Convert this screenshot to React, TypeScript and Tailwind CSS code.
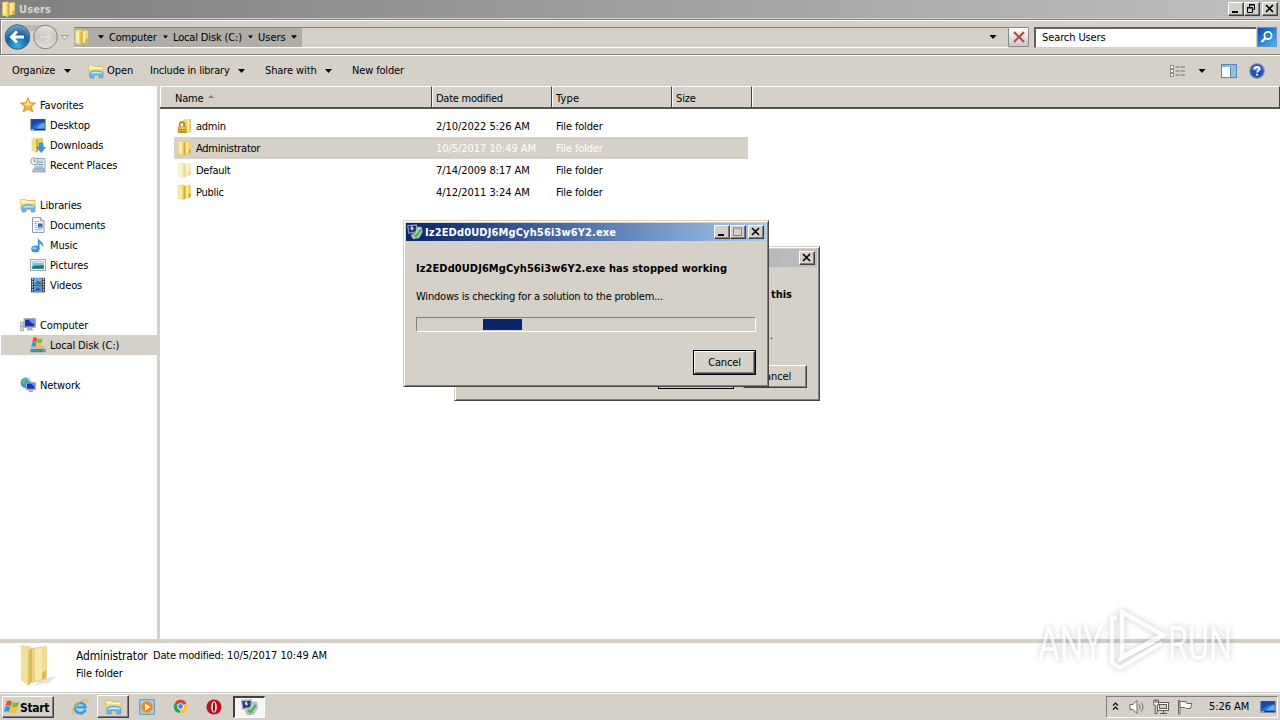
import React, { ReactNode } from "react";
import clsx from "clsx";

interface IconProps {
  className?: string;
}

function FolderIcon({ className = "size-[16px]" }: Readonly<IconProps>) {
  return (
    <svg viewBox="0 0 16 16" className={clsx("shrink-0", className)}>
      <path d="M6 2 L13.8 1.2 V13.5 L6 14.5 Z" fill="#e6c95c" />
      <path d="M8.4 1.9 L13.8 1.4 V12.8 L8.4 14.4 Z" fill="#f0d878" />
      <path d="M9.5 2.5 L11 2.3 V12.8 L9.5 13.3 Z" fill="#fbf0ae" />
      <path d="M1.2 1.2 L6.6 0.5 L8.4 2 V15 L6.5 15.7 L1.2 14.4 Z" fill="#f1d970" />
      <path d="M6.6 2.4 L8.4 2 V15 L6.6 15.6 Z" fill="#d3ad3e" />
      <path d="M2.4 2.3 L4.6 2 V13.8 L2.4 13.3 Z" fill="#fcf2b8" />
      <path d="M11.5 13.4 L13.8 12.6 V9 L11.5 10.5 Z" fill="#cfa93a" />
    </svg>
  );
}

function LockedFolderIcon() {
  return (
    <svg viewBox="0 0 16 16" className="size-[16px] shrink-0">
      <path d="M6 1.5 L9 0.8 V15 L6 14.5 Z" fill="#f0d673" />
      <path d="M9 1.5 L14 1 V13.5 L9 15.3 Z" fill="#e9cd62" />
      <path d="M10 2 L12 1.8 V13 L10 13.8 Z" fill="#fbf0ae" />
      <path
        d="M2.7 9 V6.5 C2.7 3.3 7.3 3.3 7.3 6.5 V9"
        fill="none"
        stroke="#a8842c"
        strokeWidth="1.6"
      />
      <rect x="0.8" y="8.5" width="8.6" height="6.5" rx="0.8" fill="#c48d1d" />
      <rect x="1.5" y="9.2" width="7.2" height="1.6" fill="#eecb62" />
      <rect x="1.5" y="12" width="7.2" height="1" fill="#dfae40" />
    </svg>
  );
}

function LibraryIcon({ className = "size-[16px]" }: Readonly<IconProps>) {
  return (
    <svg viewBox="0 0 16 16" className={clsx("shrink-0", className)}>
      <path d="M0.5 2 H6 L7 3 H15.5 V13 H0.5 Z" fill="#e0bd4c" />
      <path d="M1.2 2.8 H5.6 L6.6 4 H14.8 V6 H1.2 Z" fill="#fdf3b5" />
      <path d="M1.2 6 H14.8 V12.5 H1.2 Z" fill="#f6dd80" />
      <path
        d="M2 9.5 C3 7 13 7 14.8 9.5 V15 H11.2 V11.8 H5.8 V15 H2 Z"
        fill="#6db8e2"
        stroke="#3f8fc1"
        strokeWidth="0.6"
      />
      <path d="M3 9.7 C5 8.3 11 8.3 14 9.6 V10.6 H3 Z" fill="#c3e8f8" />
    </svg>
  );
}

function StarIcon() {
  return (
    <svg viewBox="0 0 16 16" className="size-[16px] shrink-0">
      <path
        d="M8 0.8 L10.1 5.8 L15.5 6.1 L11.3 9.6 L12.8 15 L8 12 L3.2 15 L4.7 9.6 L0.5 6.1 L5.9 5.8 Z"
        fill="#f9b437"
        stroke="#dc7b1c"
        strokeWidth="0.8"
      />
      <path d="M8 2.5 L9.4 6.6 L12.8 6.9 L8 8.8 L3.4 6.9 L6.6 6.6 Z" fill="#fde186" />
    </svg>
  );
}

function DesktopIcon({ className = "size-[16px]" }: Readonly<IconProps>) {
  return (
    <svg viewBox="0 0 16 16" className={clsx("shrink-0", className)}>
      <rect x="0.5" y="2" width="15" height="11.5" fill="#28508e" />
      <rect x="1.3" y="2.8" width="13.4" height="8.8" fill="#2f6ed0" />
      <path d="M1.3 2.8 H14.7 V5 C9 5 5 7 1.3 11 Z" fill="#1c49a6" />
      <path d="M6 11.6 C9 8 12 6 14.7 6 V11.6 Z" fill="#62a8ec" />
      <rect x="1" y="12.2" width="3" height="1" fill="#8bc3f0" />
      <rect x="5" y="12.3" width="10" height="0.8" fill="#15305c" />
    </svg>
  );
}

function DownloadsIcon() {
  return (
    <svg viewBox="0 0 16 16" className="size-[16px] shrink-0">
      <path d="M6 1.5 L13 1 V12 L6 14 Z" fill="#e9cd69" />
      <path d="M1.5 1.5 L6 0.5 L8 2 V15 L6 15.5 L1.5 14 Z" fill="#f3df8c" />
      <path d="M6.2 2.3 L8 2 V15 L6.2 15.5 Z" fill="#cdaa43" />
      <path
        d="M9.3 6 H13 V10.3 H15.6 L11.2 15.6 L6.8 10.3 H9.3 Z"
        fill="#3c9ada"
        stroke="#2173b2"
        strokeWidth="0.6"
      />
    </svg>
  );
}

function RecentIcon() {
  return (
    <svg viewBox="0 0 16 16" className="size-[16px] shrink-0">
      <path d="M5 1.5 H15 V12 H5 Z" fill="#d7e4ec" stroke="#8b9ba7" strokeWidth="0.8" />
      <path d="M3.5 12 H14.5 L15.5 15 H2.5 Z" fill="#a9c6d8" stroke="#7a93a5" strokeWidth="0.7" />
      <path d="M7.5 5 H13 M7.5 7.5 H13 M6 10 H13" stroke="#6c9dbf" strokeWidth="1" />
      <circle cx="4.2" cy="4.2" r="3.5" fill="#eef1f1" stroke="#8e9799" strokeWidth="0.9" />
      <path d="M4.2 2 V4.4 H6" stroke="#5c6468" strokeWidth="0.8" fill="none" />
    </svg>
  );
}

function DocumentIcon() {
  return (
    <svg viewBox="0 0 16 16" className="size-[16px] shrink-0">
      <path d="M2.5 0.6 H10.5 L14 4 V15.4 H2.5 Z" fill="#fbfcfd" stroke="#7f8c9a" strokeWidth="0.9" />
      <path d="M10.5 0.6 V4 H14" fill="#d7dde4" stroke="#7f8c9a" strokeWidth="0.7" />
      <path d="M4.5 4.5 H9 M4.5 6.5 H7 M4.5 8.5 H7 M4.5 10.5 H7 M4.5 12.8 H12" stroke="#8da4bd" strokeWidth="0.9" />
      <rect x="8" y="6.5" width="4.5" height="4.7" fill="#2e62ae" />
      <path d="M8 11.2 L10 8.5 L12.5 11.2 Z" fill="#7fb2e0" />
    </svg>
  );
}

function MusicIcon() {
  return (
    <svg viewBox="0 0 16 16" className="size-[16px] shrink-0">
      <path d="M7.8 0.5 C8.3 3.5 14.5 4.5 13.2 10.5 C12.5 8 11 6.8 9.6 6.4 V12 H7.8 Z" fill="#3f97d6" />
      <ellipse cx="5.4" cy="12" rx="4.2" ry="3.5" fill="#3b94d7" />
      <ellipse cx="4.5" cy="11.2" rx="2" ry="1.3" fill="#8fcdf2" />
    </svg>
  );
}

function PictureIcon() {
  return (
    <svg viewBox="0 0 16 16" className="size-[16px] shrink-0">
      <rect x="0.6" y="2.6" width="14.8" height="11" fill="#fdfdfd" stroke="#8c9cab" strokeWidth="0.9" />
      <rect x="2.3" y="4.2" width="11.4" height="7.8" fill="#79bfec" />
      <path d="M2.3 9.5 C5 7.5 8 9.5 13.7 8 V12 H2.3 Z" fill="#276f8c" />
      <path d="M2.3 11 H13.7 V12 H2.3 Z" fill="#2e9a78" />
      <path d="M3 5.5 C6 4.6 9 6.4 13 5.2" stroke="#e7f6fc" strokeWidth="1" fill="none" />
    </svg>
  );
}

function VideoIcon() {
  return (
    <svg viewBox="0 0 16 16" className="size-[16px] shrink-0">
      <rect x="1" y="0.8" width="14" height="14.6" fill="#39424c" />
      <rect x="4" y="1" width="8" height="6.7" fill="#66aee0" />
      <rect x="4" y="8.5" width="8" height="6.6" fill="#4c9bd6" />
      <path d="M5 6.5 L8 3.5 L11.5 7 Z M5 14 L7.5 10 L11 13 Z" fill="#2b5f9b" />
      <path d="M10 5 L12 4 V7 H10 Z" fill="#b5633c" />
      <path d="M2.5 1.5 V15 M13.5 1.5 V15" stroke="#f0f2f3" strokeWidth="1.2" strokeDasharray="1.3 1.3" />
    </svg>
  );
}

function ComputerIcon() {
  return (
    <svg viewBox="0 0 16 16" className="size-[16px] shrink-0">
      <rect x="4" y="1.5" width="11.5" height="9" fill="#c7ccd6" stroke="#8189a0" strokeWidth="0.6" />
      <rect x="5" y="2.5" width="9.5" height="7" fill="#1e2fb0" />
      <path d="M9 2.5 H14.5 V7 C12 7 10 5 9 2.5 Z" fill="#6f8df0" />
      <path d="M8 10.5 H11.5 L13.5 13.5 H6 Z" fill="#a8b0bb" />
      <rect x="0.7" y="5" width="2.8" height="9" fill="#d2d7cf" stroke="#8d938c" strokeWidth="0.6" />
      <rect x="1.3" y="9" width="1.6" height="1" fill="#62b04c" />
    </svg>
  );
}

function WindowsFlag({ className }: Readonly<IconProps>) {
  return (
    <svg viewBox="0 0 16 16" className={clsx("shrink-0", className)}>
      <path d="M2.8 2.3 C5 1 6.5 1.5 8 2.6 L6.6 7.4 C5 6.3 3.5 6.2 1.4 7.2 Z" fill="#e9562a" />
      <path d="M8.8 3 C10.5 4 12.5 4.2 15.2 2.8 L13.8 7.6 C11.5 8.8 9.5 8.8 7.5 7.7 Z" fill="#7dba3c" />
      <path d="M1.1 8.1 C3 7 4.7 7.2 6.3 8.3 L5 13 C3.5 12 1.8 12 -0.2 13 Z" fill="#3a8fdc" />
      <path d="M7.2 8.7 C9 9.7 11.3 9.8 13.5 8.5 L12.2 13.3 C10 14.6 7.5 14.3 5.8 13.3 Z" fill="#f8bf2c" />
    </svg>
  );
}

function DiskIcon() {
  return (
    <svg viewBox="0 0 16 16" className="size-[16px] shrink-0">
      <path d="M2.5 9 H13.5 L15.6 12 V15.3 H0.4 V12 Z" fill="#b9bfc4" />
      <rect x="0.6" y="12" width="14.8" height="3.2" fill="#66777f" />
      <rect x="1.3" y="12.8" width="9" height="1.6" fill="#3c98a5" />
      <rect x="12.5" y="12.8" width="2" height="1.4" fill="#76dd58" />
      <path d="M3.3 0.8 C5 0 6 0.4 7.4 1.2 L6.6 5.2 C5 4.4 4 4.4 2.4 5.1 Z" fill="#e9562a" />
      <path d="M8 1.5 C9.4 2.3 11 2.2 12.6 1.4 L11.8 5.4 C10 6.2 8.6 6.2 7.2 5.5 Z" fill="#7dba3c" />
      <path d="M2.2 5.7 C3.8 5 5 5.1 6.4 5.8 L5.6 9.7 C4 9 3 9 1.4 9.7 Z" fill="#3a8fdc" />
      <path d="M7.1 6.1 C8.5 6.9 10.2 6.8 11.6 6 L10.8 10 C9 10.8 7.6 10.8 6.3 10 Z" fill="#f8bf2c" />
    </svg>
  );
}

function NetworkIcon() {
  return (
    <svg viewBox="0 0 16 16" className="size-[16px] shrink-0">
      <circle cx="5.8" cy="5.8" r="5.3" fill="#3c9fc4" />
      <path d="M2 3.5 C4 0.8 7 2 7.5 3 C6 4.5 4 4 4.5 6.5 C3 8 1.5 6 2 3.5 Z" fill="#5fc06e" />
      <path d="M7 1 C9.5 1.5 11 4 10.5 5 C9 4.5 8 3 7 1 Z" fill="#b4e6ef" />
      <rect x="6" y="5.6" width="9.5" height="7.2" fill="#c1c8d4" stroke="#7f8799" strokeWidth="0.6" />
      <rect x="7" y="6.5" width="7.5" height="5.3" fill="#1b2fc0" />
      <path d="M11 6.5 H14.5 V10 Z" fill="#708ef2" />
      <path d="M9.5 12.8 H12.3 L13.3 15 H8.5 Z" fill="#a6adb8" />
    </svg>
  );
}

function ErrorReportIcon({ className }: Readonly<IconProps>) {
  return (
    <svg viewBox="0 0 16 16" className={clsx("shrink-0", className)}>
      <path d="M0.3 1.3 L9.8 0.6 V8.2 L1.5 9.7 Z" fill="#cfd4e4" stroke="#6c7288" strokeWidth="0.5" />
      <path d="M1.2 2.1 L9 1.6 V7.4 L2.1 8.7 Z" fill="#1529a5" />
      <path d="M4 2.5 L6.2 2.4 L5.5 4.3 H7.4 L4.2 7.2 L4.8 5.2 H3.3 Z" fill="#f6e34b" />
      <path d="M10 3 H14.5 L15.5 8 L12 14 L6 15 L4 11 L8.5 8.5 Z" fill="#b3cfcb" stroke="#7a968c" strokeWidth="0.5" />
      <path d="M6.5 10.5 L9 12.5 L14 5.5" stroke="#54ac4c" strokeWidth="2.2" fill="none" />
    </svg>
  );
}

function Caret({ className = "w-[7px]" }: Readonly<IconProps>) {
  return (
    <svg viewBox="0 0 7 4" className={clsx("h-[4px] shrink-0", className)}>
      <path d="M0 0 H7 L3.5 4 Z" fill="#000" />
    </svg>
  );
}

const RAISED =
  "border border-t-white border-l-white border-r-[#404040] border-b-[#404040] shadow-[inset_-1px_-1px_0_#808080] bg-[#d5d0c8]";

interface CaptionButtonProps {
  kind: "min" | "max" | "restore" | "close";
  disabled?: boolean;
}

function CaptionButton({ kind, disabled }: Readonly<CaptionButtonProps>) {
  const color = disabled ? "#808080" : "#000";
  return (
    <div className={clsx("flex h-[14px] w-[16px] items-center justify-center", RAISED)}>
      <svg viewBox="0 0 14 12" className="h-[12px] w-[14px]" fill="none" stroke={color}>
        {kind === "min" && <path d="M3 9 H9" strokeWidth="2" />}
        {kind === "max" && (
          <path d="M2.5 2 V9.5 H10.5 V2 M2 2 H11" strokeWidth="1" />
        )}
        {kind === "restore" && (
          <>
            <path d="M4 1.5 H10 M4.5 2 V4 M9.5 2 V6.5 H8" />
            <path d="M4 2 H10 M2 5 H8" />
            <path d="M2.5 4.5 V9.5 H7.5 V4.5 H2" />
          </>
        )}
        {kind === "close" && <path d="M3 2 L10 9 M10 2 L3 9" strokeWidth="1.6" />}
      </svg>
    </div>
  );
}

function TitleBar() {
  return (
    <div className="flex h-[18px] items-center bg-linear-to-r from-[#808080] to-[#c0c0c0] pr-[2px] pl-px">
      <FolderIcon className="size-[16px]" />
      <span className="ml-[2px] flex-1 text-[11px] font-bold tracking-[0.1px] text-[#d9d5cd]">
        Users
      </span>
      <CaptionButton kind="min" />
      <CaptionButton kind="restore" />
      <div className="w-[2px]" />
      <CaptionButton kind="close" />
    </div>
  );
}

function NavBar() {
  return (
    <div className="flex h-[36px] items-center border-t border-b border-l border-t-[#808080] border-b-[#808080] border-l-[#808080] shadow-[inset_1px_1px_0_#fff,0_1px_0_#fff]">
      <svg viewBox="0 0 70 28" className="ml-[2px] h-[28px] w-[70px] shrink-0">
        <defs>
          <radialGradient id="back" cx="0.5" cy="0.85" r="0.85">
            <stop offset="0" stopColor="#35b6ea" />
            <stop offset="0.55" stopColor="#1461a4" />
            <stop offset="1" stopColor="#7fa9cc" />
          </radialGradient>
          <linearGradient id="forward" x1="0" y1="0" x2="0" y2="1">
            <stop offset="0" stopColor="#e6e4e0" />
            <stop offset="0.5" stopColor="#c9c6c1" />
            <stop offset="1" stopColor="#e4e1dc" />
          </linearGradient>
        </defs>
        <path d="M14 2 H42 C50 2 52 6 56 8 H14 Z" fill="#bcb9b3" />
        <circle cx="14.5" cy="14" r="12.3" fill="url(#back)" stroke="#46637d" />
        <path
          d="M21 14 H9 M14 8.5 L8.5 14 L14 19.5"
          fill="none"
          stroke="#fff"
          strokeWidth="3"
        />
        <circle cx="42.5" cy="14" r="11.8" fill="url(#forward)" stroke="#85827d" />
        <path
          d="M37 14 H48 M43.5 9.5 L48 14 L43.5 18.5"
          fill="none"
          stroke="#dedbd6"
          strokeWidth="2.4"
        />
        <path d="M58 12.5 H65.5 L61.7 16.5 Z" fill="#eceae6" stroke="#8a8782" strokeWidth="0.8" />
      </svg>
      <div className="ml-px flex h-[21px] flex-1 items-center border-t border-b border-t-[#808080] border-b-white text-[11px]">
        <div className="flex h-full w-[228px] items-center bg-[#b0ada7]">
          <FolderIcon />
          <Caret className="ml-[8px] w-[6px]" />
          <span className="ml-[5px] w-[54px] tracking-[-0.2px] whitespace-nowrap">Computer</span>
          <Caret className="w-[5px]" />
          <span className="ml-[5px] w-[75px] tracking-[-0.15px] whitespace-nowrap">
            Local Disk (C:)
          </span>
          <Caret className="w-[5px]" />
          <span className="ml-[5px] w-[33px] tracking-[0px]">Users</span>
          <Caret className="w-[6px]" />
        </div>
        <div className="flex-1" />
        <Caret className="mr-[11px] w-[8px]" />
      </div>
      <div className="flex h-[20px] w-[21px] items-center justify-center rounded-[1px] border border-[#85898d] bg-linear-to-b from-white to-[#cbc8c4]">
        <svg viewBox="0 0 14 12" className="h-[12px] w-[14px]">
          <path d="M2 1 L12 11 M12 1 L2 11" stroke="#bb4a4d" strokeWidth="2.2" />
        </svg>
      </div>
      <div className="ml-[5px] flex h-[21px] w-[222px] items-center border-t-2 border-b border-l-2 border-t-[#606060] border-b-[#d5d0c8] border-l-[#606060] bg-white pl-[6px] text-[11px]">
        <span className="tracking-[-0.1px]">Search Users</span>
      </div>
      <div className="mr-[3px] ml-px flex size-[20px] items-center justify-center border border-[#6a93cc] bg-linear-to-br from-[#1c44b4] to-[#3fc0f0]">
        <svg viewBox="0 0 14 14" className="size-[14px]" fill="none" stroke="#fff">
          <circle cx="8" cy="5.5" r="3.6" strokeWidth="1.7" />
          <path d="M5.4 8.2 L1.5 12" strokeWidth="2.4" />
        </svg>
      </div>
    </div>
  );
}

function Toolbar() {
  return (
    <div className="flex h-[31px] items-center pl-[12px] text-[11px] whitespace-nowrap">
      <span className="w-[52px] tracking-[-0.15px]">Organize</span>
      <Caret className="w-[7px]" />
      <LibraryIcon className="ml-[17px] size-[16px]" />
      <span className="ml-[3px] w-[43px] tracking-[-0.05px]">Open</span>
      <span className="w-[88px] tracking-[-0.2px]">Include in library</span>
      <Caret className="w-[7px]" />
      <span className="ml-[20px] w-[60px] tracking-[-0.1px]">Share with</span>
      <Caret className="w-[7px]" />
      <span className="ml-[20px] tracking-[-0.15px]">New folder</span>
      <div className="flex-1" />
      <svg viewBox="0 0 16 14" className="h-[14px] w-[16px]">
        {[2, 6, 10].map((y) => (
          <g key={y}>
            <rect x="0.5" y={y - 0.5} width="3" height="3" fill="#fff" stroke="#77797b" strokeWidth="0.8" />
            <path d={`M5.5 ${y + 1} H9.5 M10.5 ${y + 1} H15`} stroke="#6d7175" />
          </g>
        ))}
      </svg>
      <Caret className="ml-[12px] w-[8px]" />
      <svg viewBox="0 0 16 14" className="ml-[15px] h-[14px] w-[16px]">
        <rect x="0.5" y="0.5" width="15" height="13" fill="#fcfdfe" stroke="#5b88ae" />
        <rect x="1" y="1" width="14" height="2" fill="#91b8d6" />
        <rect x="10" y="3" width="5" height="10" fill="#8ec4e2" />
        <path d="M9.5 3 V13" stroke="#5b88ae" />
      </svg>
      <svg viewBox="0 0 16 16" className="mr-[15px] ml-[12px] size-[16px]">
        <circle cx="8" cy="8" r="7.3" fill="#2451b8" stroke="#8795b3" strokeWidth="1.2" />
        <path d="M3 6 C4 2 12 2 13 6 C10 8 6 8 3 6 Z" fill="#6f97e4" />
        <path
          d="M5.7 6.2 C5.7 3.2 10.4 3.3 10.3 6 C10.3 7.7 8.1 7.6 8.1 9.6"
          fill="none"
          stroke="#fff"
          strokeWidth="1.7"
        />
        <rect x="7.2" y="10.8" width="1.8" height="1.8" fill="#fff" />
      </svg>
    </div>
  );
}

interface NavItem {
  label: string;
  icon: ReactNode;
  isActive?: boolean;
}

interface NavGroup extends NavItem {
  items: NavItem[];
}

const NAV_GROUPS: NavGroup[] = [
  {
    label: "Favorites",
    icon: <StarIcon />,
    items: [
      { label: "Desktop", icon: <DesktopIcon /> },
      { label: "Downloads", icon: <DownloadsIcon /> },
      { label: "Recent Places", icon: <RecentIcon /> },
    ],
  },
  {
    label: "Libraries",
    icon: <LibraryIcon />,
    items: [
      { label: "Documents", icon: <DocumentIcon /> },
      { label: "Music", icon: <MusicIcon /> },
      { label: "Pictures", icon: <PictureIcon /> },
      { label: "Videos", icon: <VideoIcon /> },
    ],
  },
  {
    label: "Computer",
    icon: <ComputerIcon />,
    items: [{ label: "Local Disk (C:)", icon: <DiskIcon />, isActive: true }],
  },
  { label: "Network", icon: <NetworkIcon />, items: [] },
];

function Sidebar() {
  return (
    <div className="flex w-[160px] shrink-0 flex-col gap-[20px] border-r-[3px] border-[#d5d0c8] bg-white pt-[9px] text-[11px]">
      {NAV_GROUPS.map((group) => (
        <div key={group.label}>
          <div className="flex h-[20px] items-center gap-[4px] pl-[20px]">
            {group.icon}
            <span className="tracking-[-0.12px]">{group.label}</span>
          </div>
          {group.items.map((item) => (
            <div
              key={item.label}
              className={clsx(
                "ml-px flex h-[20px] items-center gap-[4px] pl-[29px]",
                item.isActive && "bg-[#d5d0c8]",
              )}
            >
              {item.icon}
              <span className="tracking-[-0.12px]">{item.label}</span>
            </div>
          ))}
        </div>
      ))}
    </div>
  );
}

const FILES = [
  { name: "admin", date: "2/10/2022 5:26 AM", icon: <LockedFolderIcon /> },
  { name: "Administrator", date: "10/5/2017 10:49 AM", icon: <FolderIcon />, isActive: true },
  { name: "Default", date: "7/14/2009 8:17 AM", icon: <FolderIcon className="size-[16px] opacity-50" /> },
  { name: "Public", date: "4/12/2011 3:24 AM", icon: <FolderIcon /> },
];

const HEADER_CELL =
  "flex h-full items-center border-t border-l border-r border-t-white border-l-white border-r-[#404040] pt-[2px]";

function FileList() {
  return (
    <div className="flex flex-1 flex-col bg-white text-[11px]">
      <div className="flex h-[23px] items-center border-b-2 border-[#55534f] bg-[#d5d0c8]">
        <div className={clsx("w-[272px] pl-[14px]", HEADER_CELL)}>
          <span className="tracking-[-0.2px]">Name</span>
          <svg viewBox="0 0 6 3" className="mb-[3px] ml-[5px] h-[3px] w-[6px]">
            <path d="M0 3 L3 0 L6 3 Z" fill="#85827d" />
          </svg>
        </div>
        <div className={clsx("w-[120px] pl-[3px]", HEADER_CELL)}>
          <span className="tracking-[-0.25px]">Date modified</span>
        </div>
        <div className={clsx("w-[120px] pl-[3px]", HEADER_CELL)}>
          <span className="tracking-[0.2px]">Type</span>
        </div>
        <div className={clsx("w-[80px] pl-[3px]", HEADER_CELL)}>
          <span className="tracking-[-0.15px]">Size</span>
        </div>
        <div className={clsx("flex-1", HEADER_CELL)} />
      </div>
      <div className="pt-[6px] pl-[14px]">
        {FILES.map((file) => (
          <div
            key={file.name}
            className={clsx(
              "flex h-[22px] w-[574px] items-center pl-[3px]",
              file.isActive && "bg-[#d5d0c8]",
            )}
          >
            {file.icon}
            <span className="ml-[3px] w-[240px] tracking-[-0.25px]">{file.name}</span>
            <span className={clsx("w-[120px] tracking-[-0.05px]", file.isActive && "text-white")}>
              {file.date}
            </span>
            <span className={clsx("tracking-[-0.15px]", file.isActive && "text-white")}>
              File folder
            </span>
          </div>
        ))}
      </div>
    </div>
  );
}

function DetailsPane() {
  return (
    <div className="flex h-[53px] border-t-4 border-[#d5d0c8] bg-white text-[11px]">
      <svg viewBox="0 0 40 46" className="ml-[18px] h-[46px] w-[40px]">
        <path d="M22 37 L38 33 L31 40 L16 42 Z" fill="#dad8d4" opacity="0.7" />
        <path d="M13 5 L29 3 V36 L14 40 Z" fill="#ebd381" />
        <path d="M17 6 L24 5 V36 L17 38 Z" fill="#f6e8ab" />
        <path d="M24 4 L29 3 V36 L24 37 Z" fill="#f0dc94" />
        <path d="M24 30 L28 27 V35 L24 37 Z" fill="#d9ba58" />
        <path d="M3 2 L12 3 L14 5 V39 L10 43 L3 37 Z" fill="#f2e09c" />
        <path d="M10.5 7 L14 5 V39 L10 43 Z" fill="#d9bb5f" />
      </svg>
      <div className="ml-[18px] flex flex-col pt-[3px] leading-[16px] whitespace-nowrap">
        <div className="flex">
          <span className="w-[77px] text-[12px] tracking-[-0.15px]">Administrator</span>
          <span className="w-[74px] tracking-[-0.2px]">Date modified:</span>
          <span className="tracking-[-0.05px]">10/5/2017 10:49 AM</span>
        </div>
        <span className="tracking-[-0.15px]">File folder</span>
      </div>
    </div>
  );
}

function Taskbar() {
  return (
    <div className="flex h-[28px] items-center border-t border-[#c9c6bf] bg-[#d5d0c8] shadow-[inset_0_1px_0_#fff]">
      <div className={clsx("ml-[2px] flex h-[22px] w-[52px] items-center", RAISED)}>
        <WindowsFlag className="ml-px size-[16px]" />
        <span className="text-[12px] font-bold tracking-[-0.3px]">Start</span>
      </div>
      <svg viewBox="0 0 18 18" className="ml-[17px] size-[18px]">
        <path
          d="M14.5 11.5 C12 17.5 3.5 15.5 4 9.5 C4.5 3.5 14 3.5 14.4 9.3 H6"
          fill="none"
          stroke="#3a9ee4"
          strokeWidth="2.6"
        />
        <path d="M2 16 C-1 10 9 1 16 2 C17 3 16.5 4.5 16 5" fill="none" stroke="#eebb3c" strokeWidth="1.3" />
      </svg>
      <div className={clsx("ml-[8px] flex h-[23px] w-[32px] items-center justify-center", RAISED)}>
        <LibraryIcon className="size-[17px]" />
      </div>
      <svg viewBox="0 0 16 16" className="ml-[10px] size-[16px]">
        <rect x="0.7" y="0.7" width="14.6" height="14.6" fill="#a8cfec" stroke="#5a92c4" />
        <circle cx="8" cy="8" r="5.8" fill="#f28a1c" />
        <path d="M6 4.5 L11.5 8 L6 11.5 Z" fill="#fff" />
      </svg>
      <svg viewBox="0 0 16 16" className="ml-[18px] size-[15px]">
        <path d="M8 8 L1.8 4.4 A7 7 0 0 1 14.4 5 Z" fill="#dc4636" />
        <path d="M8 8 L14.4 5 A7 7 0 0 1 7 15 Z" fill="#fbc62c" />
        <path d="M8 8 L7 15 A7 7 0 0 1 1.8 4.4 Z" fill="#2f9f55" />
        <circle cx="8" cy="8" r="3.4" fill="#fff" />
        <circle cx="8" cy="8" r="2.6" fill="#4284ee" />
      </svg>
      <svg viewBox="0 0 16 16" className="ml-[18px] size-[16px]">
        <circle cx="8" cy="8" r="7.6" fill="#b9141b" />
        <ellipse cx="8" cy="8" rx="2.8" ry="5.8" fill="#f8f4f4" />
        <ellipse cx="8" cy="8" rx="1.2" ry="4.8" fill="#9c1016" />
      </svg>
      <div className="ml-[11px] flex h-[22px] w-[32px] items-center justify-center border-t-2 border-l-2 border-t-[#404040] border-l-[#404040] border-r border-b border-r-white border-b-white bg-[#f6f5f3]">
        <ErrorReportIcon className="size-[17px]" />
      </div>
      <div className="flex-1" />
      <div className="mr-[2px] flex h-[22px] w-[172px] items-center border border-t-[#808080] border-l-[#808080] border-r-white border-b-white text-[11px]">
        <svg viewBox="0 0 7 9" className="ml-[5px] h-[9px] w-[7px]" fill="none" stroke="#000" strokeWidth="1.2">
          <path d="M1 3.7 L3.5 1.2 L6 3.7 M1 7.7 L3.5 5.2 L6 7.7" />
        </svg>
        <svg viewBox="0 0 16 16" className="ml-[10px] size-[16px]" stroke="#696763" fill="none">
          <path d="M1 5.5 H4 L8 1.5 V14.5 L4 10.5 H1 Z" fill="#fff" />
          <path d="M10 5.5 C11.3 7 11.3 9 10 10.5 M12 3.5 C14.5 6 14.5 10 12 12.5" />
        </svg>
        <svg viewBox="0 0 16 16" className="ml-[8px] size-[16px]" stroke="#5d5b57" fill="#fff">
          <rect x="4.5" y="3.5" width="11" height="8" />
          <rect x="6.5" y="5.5" width="7" height="4" fill="#d5d0c8" />
          <path d="M7 14.5 H14 M10.5 11.5 V14.5" />
          <path d="M0.8 1 H5.5 V6 H4.2 V14.5 H2.2 V6 H0.8 Z M2.3 1 V4 M4 1 V4" />
        </svg>
        <svg viewBox="0 0 16 16" className="ml-[8px] size-[16px]" stroke="#696763" fill="#fff">
          <path d="M1.5 1.5 V15 H3 V1.5 Z" />
          <path d="M3 2.5 H9 L10 4.5 H15 L13.5 9.5 H9 L8 8.5 H3 Z" />
        </svg>
        <span className="ml-[16px] w-[51px] tracking-[-0.05px] whitespace-nowrap">5:26 AM</span>
        <DesktopIcon />
      </div>
    </div>
  );
}

const WINDOW_FRAME =
  "absolute flex flex-col border-[#484644] border-t-[#d5d0c8] border-l-[#d5d0c8] border bg-[#d5d0c8] shadow-[inset_1px_1px_0_#fff,inset_-1px_-1px_0_#808080]";

function BackgroundDialog() {
  return (
    <div className={clsx("top-[246px] left-[454px] h-[155px] w-[366px] p-[2px]", WINDOW_FRAME)}>
      <div className="flex h-[18px] items-center justify-end bg-linear-to-r from-[#808080] to-[#c0c0c0] pr-[2px]">
        <CaptionButton kind="close" />
      </div>
      <div className="mt-[21px] mr-[25px] text-right text-[11px] leading-[14px] font-bold">this</div>
      <div className="mt-[26px] mr-[44px] text-right text-[11px] leading-[16px]">.</div>
      <div className="mt-[21px] mr-[10px] flex justify-end gap-[9px] text-[11px]">
        <div className="h-[24px] w-[76px] border border-black" />
        <div className={clsx("flex h-[23px] w-[64px] items-center justify-end pr-[15px]", RAISED)}>
          <span className="tracking-[-0.15px]">Cancel</span>
        </div>
      </div>
    </div>
  );
}

function ErrorDialog() {
  return (
    <div className={clsx("top-[220px] left-[403px] h-[167px] w-[366px] p-[2px]", WINDOW_FRAME)}>
      <div className="flex h-[18px] items-center bg-linear-to-r from-[#0a246a] to-[#a6caf0] pr-[2px] pl-px">
        <ErrorReportIcon className="size-[16px]" />
        <span className="ml-[2px] flex-1 text-[11px] font-bold tracking-[0.13px] text-white">
          Iz2EDd0UDJ6MgCyh56i3w6Y2.exe
        </span>
        <CaptionButton kind="min" />
        <CaptionButton kind="max" disabled />
        <div className="w-[2px]" />
        <CaptionButton kind="close" />
      </div>
      <div className="flex flex-1 flex-col pt-[19px] pr-[10px] pl-[10px] text-[11px] whitespace-nowrap">
        <span className="leading-[14px] font-bold tracking-[0.07px]">
          Iz2EDd0UDJ6MgCyh56i3w6Y2.exe has stopped working
        </span>
        <span className="mt-[12px] leading-[14px] tracking-[-0.19px]">
          Windows is checking for a solution to the problem...
        </span>
        <div className="mt-[13px] h-[15px] w-[340px] border border-t-[#808080] border-l-[#808080] border-r-white border-b-white p-px">
          <div className="ml-[65px] h-[11px] w-[39px] bg-[#0a246a]" />
        </div>
        <div className="mt-[18px] flex h-[25px] w-[63px] self-end border border-black">
          <div className={clsx("flex flex-1 items-center justify-center", RAISED)}>
            <span className="tracking-[-0.15px]">Cancel</span>
          </div>
        </div>
      </div>
    </div>
  );
}

function Watermark() {
  return (
    <svg
      viewBox="0 0 240 84"
      className="absolute top-[600px] left-[1030px] h-[84px] w-[240px] font-['Roboto',sans-serif] drop-shadow-[0_0_3px_rgba(0,0,0,0.32)]"
      opacity="0.65"
    >
      <g fill="#fff" fontSize="49">
        <text x="8" y="60" textLength="65" lengthAdjust="spacingAndGlyphs">
          ANY
        </text>
        <text x="138" y="60" textLength="64" lengthAdjust="spacingAndGlyphs">
          RUN
        </text>
      </g>
      <g fill="none" stroke="#fff" strokeWidth="4.5">
        <path d="M92 12 L133 35 L92 57 Z" />
        <path d="M87 18 H82 V63 L90 68 L132 43" strokeWidth="4" />
        <path d="M88 61 L130 39" strokeWidth="2" />
      </g>
    </svg>
  );
}

export default function App() {
  return (
    <div className="relative flex h-[720px] w-[1280px] flex-col overflow-hidden bg-[#d5d0c8] font-['DejaVu_Sans_Condensed','DejaVu_Sans',sans-serif] text-black [&_span]:pt-[2px]">
      <TitleBar />
      <div className="h-px" />
      <NavBar />
      <Toolbar />
      <div className="flex h-[553px]">
        <Sidebar />
        <FileList />
      </div>
      <DetailsPane />
      <Taskbar />
      <BackgroundDialog />
      <ErrorDialog />
      <Watermark />
    </div>
  );
}
